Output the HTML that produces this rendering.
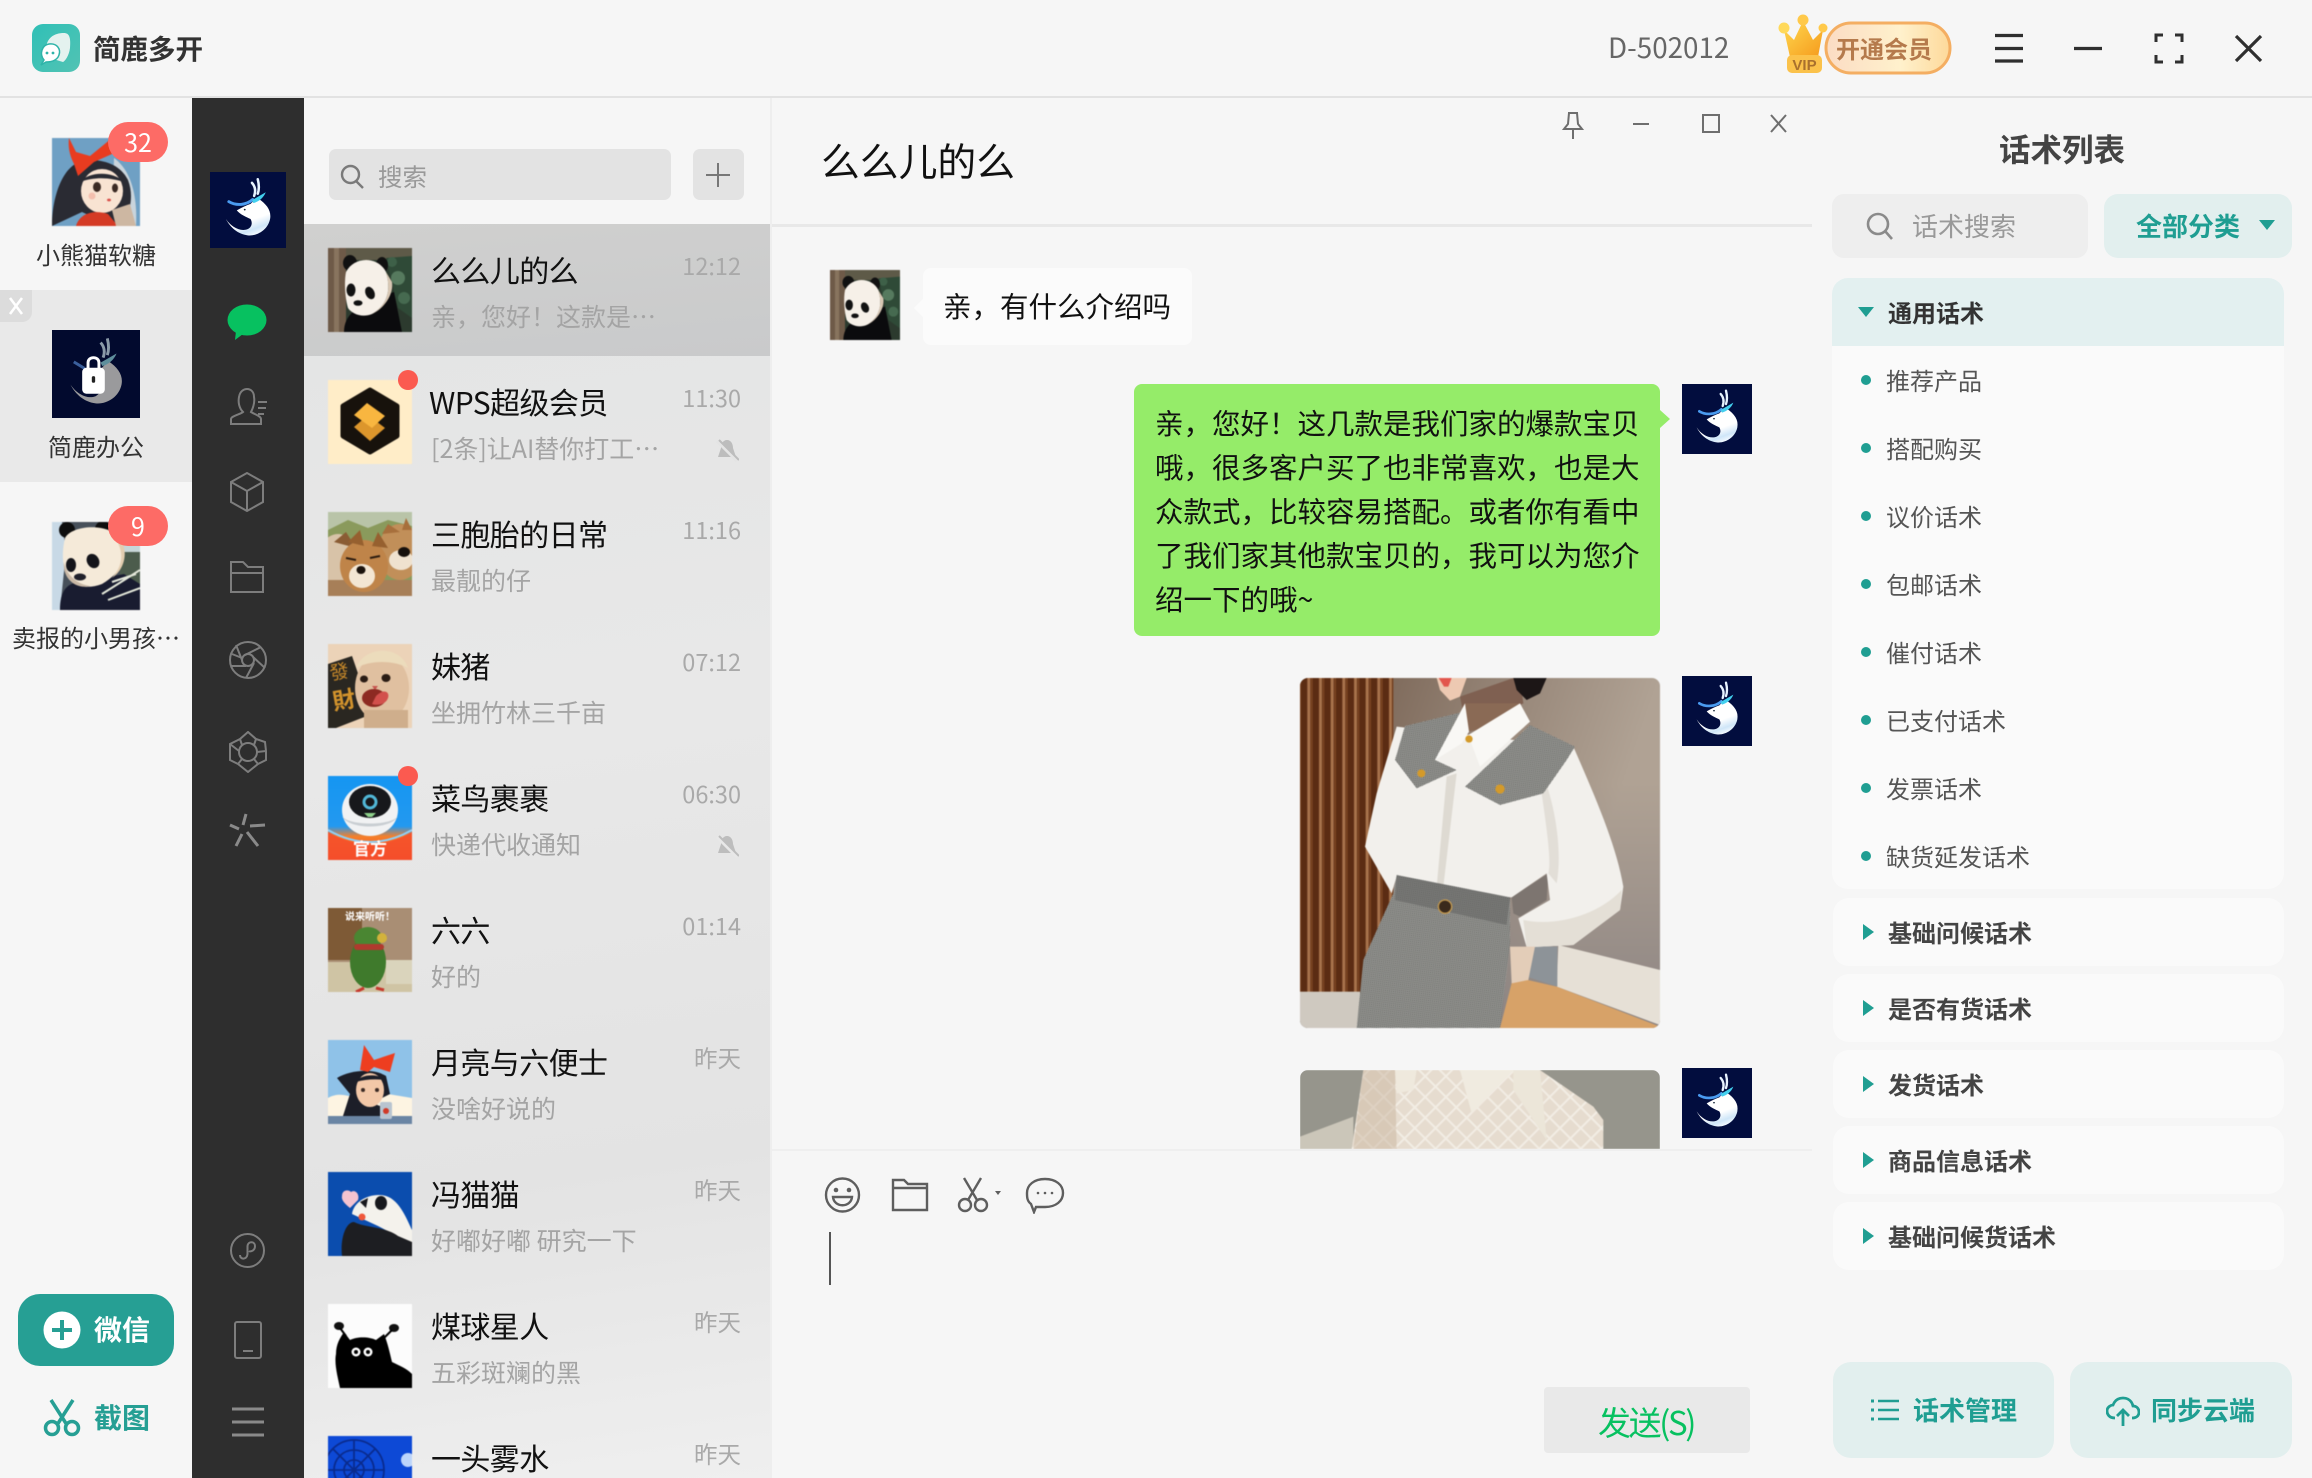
<!DOCTYPE html>
<html lang="zh-CN">
<head>
<meta charset="utf-8">
<title>简鹿多开</title>
<style>
html,body{margin:0;padding:0;width:2312px;height:1478px;overflow:hidden;background:#f6f6f6}
body{position:relative;font-family:"Noto Sans CJK SC","Liberation Sans",sans-serif;color:#222}
.a,.t,svg.a{position:absolute}
.t{white-space:nowrap}
.it{position:absolute;left:304px;width:466px;height:132px}
.it svg{position:absolute;left:24px;top:24px;width:84px;height:84px;filter:blur(.4px)}
.it .n{position:absolute;left:127px;top:20.500px;line-height:48px;font-size:30px;letter-spacing:-.6px;color:#111;white-space:nowrap}
.it .s{position:absolute;left:127px;top:72px;line-height:40px;font-size:25px;color:#a4a4a4;white-space:nowrap}
.it .m{position:absolute;right:29px;top:22px;line-height:38px;font-size:23.5px;color:#a9a9a9;white-space:nowrap}
.it .d{position:absolute;left:94px;top:14px;width:20px;height:20px;border-radius:50%;background:#fb5a50}
.it .b{position:absolute;left:411px;top:83px;width:24px;height:23px;filter:none}
.lb{position:absolute;left:0;width:192px;text-align:center;font-size:24px;line-height:34px;color:#333;white-space:nowrap}
.bg{position:absolute;background:#fd6b66;color:#fff;border-radius:20px;height:40px;line-height:40px;text-align:center;font-size:25px;width:60px}
.ic{position:absolute;fill:none;stroke:#7d7d7d;stroke-width:2}
.hi{position:absolute;left:1886px;font-size:24px;line-height:34px;color:#555;white-space:nowrap}
.bu{position:absolute;left:1861px;width:10px;height:10px;border-radius:50%;background:#1f9e92}
.cd{position:absolute;left:1833px;width:451px;height:68px;background:#fafafa;border-radius:16px}
.cd span{position:absolute;left:55px;top:17px;font-size:24px;line-height:34px;font-weight:700;color:#444;white-space:nowrap}
.cd i{position:absolute;left:30px;top:26px;width:0;height:0;border-left:11px solid #1f9e92;border-top:8px solid transparent;border-bottom:8px solid transparent}
</style>
</head>
<body>
<svg width="0" height="0" style="position:absolute">
<defs>
<linearGradient id="dg" x1="0.2" y1="0.1" x2="0.6" y2="1"><stop offset="0.6" stop-color="#fff"/><stop offset="0.85" stop-color="#cfe6f8"/><stop offset="1" stop-color="#f2f9ff"/></linearGradient>
<symbol id="deer" viewBox="0 0 210 210">
<rect width="210" height="210" fill="#020d3e"/>
<path d="M74 106C88 98 100 92 112 88C120 80 126 76 134 74C158 90 170 108 166 130C160 160 130 178 104 175C78 172 56 154 44 130C58 152 84 166 104 158C116 152 118 140 112 130C100 124 84 118 74 106Z" fill="url(#dg)"/>
<path d="M122 66C127 52 125 40 116 30M132 60C137 46 135 32 132 20" fill="none" stroke="#e8f4ff" stroke-width="7" stroke-linecap="round"/>
<path d="M52 82C72 94 100 92 118 76" fill="none" stroke="#4a9bf0" stroke-width="8" stroke-linecap="round"/>
<path d="M116 78L154 56C148 72 134 82 120 86Z" fill="#43cfee"/>
<circle cx="96" cy="104" r="2.500" fill="#123"/>
</symbol>
<pattern id="chk" width="6" height="6" patternUnits="userSpaceOnUse" patternTransform="rotate(8)"><rect width="6" height="6" fill="#b8b8b4"/><rect width="3" height="3" fill="#3e3f3c"/><rect x="3" y="3" width="3" height="3" fill="#70716e"/></pattern>
<pattern id="stp" width="35" height="20" patternUnits="userSpaceOnUse"><rect width="35" height="20" fill="#5b2c13"/><rect x="12" width="9" height="20" fill="#a8734c"/><rect x="23" width="5" height="20" fill="#7b4522"/></pattern>
<pattern id="dia" width="44" height="44" patternUnits="userSpaceOnUse" patternTransform="rotate(45)"><rect width="44" height="44" fill="#e6dccf"/><rect width="44" height="6" fill="#f2ede4"/><rect width="6" height="44" fill="#f2ede4"/></pattern>
<linearGradient id="wall" x1="0" y1="0" x2="0.9" y2="0.3"><stop offset="0" stop-color="#6f5848"/><stop offset="0.55" stop-color="#948375"/><stop offset="1" stop-color="#b0a294"/></linearGradient>
<linearGradient id="wl2" x1="0" y1="0" x2="0" y2="1"><stop offset="0.3" stop-color="#8d8583" stop-opacity="0"/><stop offset="1" stop-color="#8d8583"/></linearGradient>
<linearGradient id="vip" x1="0" y1="0" x2="1" y2="0"><stop offset="0" stop-color="#fbdcc4"/><stop offset="0.6" stop-color="#fff1cc"/><stop offset="1" stop-color="#fdd99a"/></linearGradient>
<linearGradient id="gld" x1="0" y1="0" x2="1" y2="1"><stop offset="0" stop-color="#ffd84f"/><stop offset="1" stop-color="#f59a1c"/></linearGradient>
<linearGradient id="lg" x1="0" y1="0" x2="1" y2="1"><stop offset="0" stop-color="#30c0b6"/><stop offset="1" stop-color="#52c3b4"/></linearGradient>
<linearGradient id="cai" x1="0" y1="0" x2="0" y2="1"><stop offset="0" stop-color="#1596f2"/><stop offset="0.6" stop-color="#2399f0"/><stop offset="0.72" stop-color="#f6802a"/><stop offset="1" stop-color="#ee3b2e"/></linearGradient>
<symbol id="panda" viewBox="0 0 84 84">
<rect width="84" height="84" fill="#2c3a2e"/><rect x="18" width="66" height="12" fill="#5e5a48"/><path d="M58 10L84 8V70L70 60Z" fill="#2f4a37"/><circle cx="70" cy="30" r="7" fill="#567a5e"/><circle cx="76" cy="50" r="6" fill="#466a50"/><circle cx="64" cy="14" r="5" fill="#3e6048"/>
<rect width="18" height="84" fill="#6e5a48"/><rect x="6" width="5" height="84" fill="#88745e"/>
<path d="M16 84C16 66 30 56 66 44L74 84Z" fill="#0b0b0d"/>
<ellipse cx="22" cy="15" rx="7" ry="8" fill="#111"/><ellipse cx="54" cy="17" rx="6" ry="8" fill="#111"/>
<path d="M18 24C26 8 50 8 58 24C64 44 58 58 44 66C34 70 24 66 20 60C17 50 16 34 18 24Z" fill="#f6f0e8"/><path d="M58 24C64 44 58 58 44 66C54 62 66 48 64 34Z" fill="#d9c8b4"/>
<ellipse cx="23" cy="42" rx="4.500" ry="6.500" fill="#121212"/><ellipse cx="42" cy="45" rx="4.500" ry="6.500" fill="#121212" transform="rotate(-25 42 45)"/>
<ellipse cx="30" cy="55" rx="4.500" ry="2.800" fill="#111"/>
</symbol>
</defs>
</svg>

<!-- title bar -->
<div class="a" style="left:0;top:96px;width:2312px;height:2px;background:#e2e2e2"></div>
<svg class="a" style="left:32px;top:24px" width="48" height="48" viewBox="0 0 48 48"><rect width="48" height="48" rx="11" fill="url(#lg)"/><path d="M14 26C14 14 22 9 32 9C37 9 39 13 38 24C37 32 33 37 31 38C22 35 14 34 14 26Z" fill="#e4f2ef"/><path d="M12 36C7 30 10 21 17 20C25 19 29 25 27 31C25 37 18 38 14 38L9 41Z" fill="#fff" stroke="#2fb4a9" stroke-width="1.500"/><circle cx="15" cy="29" r="1.400" fill="#2fb4a9"/><circle cx="21" cy="29" r="1.400" fill="#2fb4a9"/></svg>
<div class="t" style="left:93px;top:25px;line-height:44px;font-size:27.500px;font-weight:700;color:#333">简鹿多开</div>
<div class="t" style="left:1608px;top:25px;line-height:44px;font-size:27.800px;color:#666">D-502012</div>

<svg class="a" style="left:1776px;top:12px" width="180" height="66" viewBox="0 0 180 66">
<rect x="50" y="11" width="124" height="50" rx="25" fill="url(#vip)" stroke="#f4ae62" stroke-width="3"/>
<path d="M8 18L18 28L27 9L37 28L47 18L42 45H14Z" fill="url(#gld)"/><circle cx="8" cy="16" r="5.500" fill="#ffd95a"/><circle cx="27" cy="8" r="5.500" fill="#ffc94a"/><circle cx="47" cy="16" r="4.500" fill="#ffc94a"/>
<rect x="11" y="43" width="35" height="18" rx="5" fill="#fbc24b"/>
<text x="28.500" y="58" font-size="15" font-weight="700" text-anchor="middle" fill="#a9702d" font-family="Liberation Sans,sans-serif">VIP</text>
</svg>
<div class="t" style="left:1836px;top:30px;line-height:36px;font-size:24px;font-weight:700;color:#b57a4c">开通会员</div>

<svg class="a" style="left:1990px;top:28px" width="290" height="40" viewBox="0 0 290 40" fill="none" stroke="#2f2f2f" stroke-width="3.200">
<path d="M5 7.500H33M5 20.500H33M5 33H33"/>
<path d="M84 20.500H112"/>
<path d="M166 14V7H173M185 7H192V14M166 27V34H173M185 34H192V27" stroke-width="3"/>
<path d="M246 8L271 33M271 8L246 33"/>
</svg>

<!-- accounts -->
<svg class="a" style="left:52px;top:138px;filter:blur(.4px)" width="88" height="88" viewBox="0 0 88 88">
<rect width="88" height="88" fill="#6fa0c4"/><path d="M62 20C76 30 86 52 84 88H60Z" fill="#c9d4dc"/>
<path d="M0 88C0 60 10 28 30 23C50 20 68 26 76 42C82 58 78 72 72 88H60L30 74Z" fill="#2a2b33"/>
<ellipse cx="50" cy="53" rx="21" ry="22" fill="#f8e3d2"/><path d="M28 44C36 34 60 32 72 44C60 40 44 38 28 44Z" fill="#2a2b33"/>
<ellipse cx="45" cy="49" rx="4" ry="5" fill="#3b2a24"/><ellipse cx="63" cy="50" rx="3" ry="4.500" fill="#3b2a24"/><ellipse cx="57" cy="62" rx="2" ry="1.400" fill="#d9504a"/><circle cx="40" cy="58" r="3.500" fill="#f3bfae"/>
<path d="M17 0L24 14L38 18L60 0V16L42 24L26 38L22 26C17 16 16 8 17 0Z" fill="#e83c20"/>
<path d="M24 88C28 74 44 72 56 76L66 88Z" fill="#d43a25"/><path d="M60 72L78 66L84 88H64Z" fill="#cdb7a2"/>
</svg>
<div class="bg" style="left:108px;top:122px">32</div>
<div class="lb" style="top:237px">小熊猫软糖</div>

<div class="a" style="left:0;top:290px;width:192px;height:192px;background:#e9e9e9"></div>
<div class="a" style="left:0;top:290px;width:32px;height:32px;background:#dcdcdc;border-radius:0 0 10px 0"></div>
<svg class="a" style="left:8px;top:297px" width="16" height="18" viewBox="0 0 16 18"><path d="M2 1L14 17M14 1L2 17" stroke="#fff" stroke-width="2.600"/></svg>
<svg class="a" style="left:52px;top:330px" width="88" height="88" viewBox="0 0 210 210">
<rect width="210" height="210" fill="#020a2e"/>
<path d="M100 106C120 90 134 76 134 74C158 90 170 108 166 130C160 160 130 178 104 175C78 172 56 154 44 130C58 152 84 166 104 158C116 152 118 140 112 130Z" fill="#9a9a9c"/>
<path d="M122 66C127 52 125 40 116 30M132 60C137 46 135 32 132 20" stroke="#8a9aa8" stroke-width="7" fill="none"/><path d="M116 78L154 56C148 72 134 82 120 86Z" fill="#5f8f9c"/><path d="M52 76L78 92" stroke="#3a5f9c" stroke-width="7"/>
<path d="M86 92V78C86 62 112 62 112 78V92" fill="none" stroke="#fff" stroke-width="7"/><rect x="72" y="90" width="54" height="62" rx="10" fill="#fff"/><rect x="95" y="110" width="8" height="16" rx="4" fill="#222"/>
</svg>
<div class="lb" style="top:429px">简鹿办公</div>

<svg class="a" style="left:52px;top:522px;filter:blur(.4px)" width="88" height="88" viewBox="0 0 88 88">
<rect width="88" height="88" fill="#47505a"/><path d="M0 0H10L14 30L8 88H0Z" fill="#c8d9e6"/><rect x="60" width="28" height="30" fill="#c7d6d8"/><rect x="68" y="30" width="20" height="40" fill="#4c5c4c"/>
<path d="M8 88C8 70 14 60 30 60L72 52L88 62V88Z" fill="#191c30"/>
<circle cx="15" cy="8" r="8" fill="#0e0e0e"/><circle cx="51" cy="7" r="8" fill="#0e0e0e"/>
<path d="M13 16C20 2 62 0 70 20C76 36 70 50 50 62C34 68 20 64 14 52C10 42 10 28 13 16Z" fill="#f5ead9"/><path d="M62 14C70 26 74 40 60 56C72 48 76 32 70 20Z" fill="#e3cdb0"/><path d="M12 40C14 52 24 62 38 64C24 68 10 56 12 40Z" fill="#c9b8a6"/>
<ellipse cx="19" cy="43" rx="5" ry="7" fill="#14141a"/><ellipse cx="41" cy="39" rx="6" ry="7.500" fill="#14141a" transform="rotate(-30 41 39)"/>
<ellipse cx="28" cy="55" rx="6" ry="3.500" fill="#20202a"/>
<path d="M50 72L88 48M56 78L88 66M60 60L84 52" stroke="#e4e8da" stroke-width="2" fill="none"/>
</svg>
<div class="bg" style="left:108px;top:506px">9</div>
<div class="lb" style="top:620px">卖报的小男孩…</div>

<div class="a" style="left:18px;top:1294px;width:156px;height:72px;border-radius:22px;background:#269f94"></div>
<svg class="a" style="left:43px;top:1311px" width="38" height="38" viewBox="0 0 38 38"><circle cx="19" cy="19" r="18.500" fill="#fff"/><path d="M19 9V29M9 19H29" stroke="#269f94" stroke-width="4"/></svg>
<div class="t" style="left:94px;top:1310px;line-height:38px;font-size:28px;font-weight:700;color:#fff">微信</div>
<svg class="a" style="left:43px;top:1399px" width="38" height="38" viewBox="0 0 38 38" fill="none" stroke="#269f94" stroke-width="3.500"><path d="M8 1L24 26M30 1L14 26"/><circle cx="9" cy="29" r="6.500"/><circle cx="29" cy="29" r="6.500"/></svg>
<div class="t" style="left:94px;top:1398px;line-height:38px;font-size:28px;font-weight:700;color:#269f94">截图</div>

<!-- dark nav -->
<div class="a" style="left:192px;top:98px;width:112px;height:1380px;background:#2e2e2e"></div>
<svg class="a" style="left:210px;top:172px" width="76" height="76"><use href="#deer"/></svg>
<svg class="a" style="left:227px;top:304px" width="40" height="36" viewBox="0 0 40 36"><ellipse cx="20" cy="16" rx="19.500" ry="15.500" fill="#07c160"/><path d="M9 27L8 36L16 30Z" fill="#07c160"/></svg>
<svg class="ic" style="left:228px;top:388px" width="40" height="38" viewBox="0 0 40 38"><path d="M3 36V31C3 28 13 26 15 24C11 20 10 14 11 9C12 3 16 1 19 1C23 1 26 4 26 9C27 14 25 20 23 24C26 26 33 28 33 31V36Z"/><path d="M30 14H39M30 20H38M30 26H36"/></svg>
<svg class="ic" style="left:229px;top:472px" width="36" height="40" viewBox="0 0 36 40"><path d="M18 1L34 10V30L18 39L2 30V10ZM2 10L18 19L34 10M18 19V39"/></svg>
<svg class="ic" style="left:229px;top:560px" width="36" height="34" viewBox="0 0 36 34"><path d="M2 2H14L19 7H34V32H2ZM2 13H34"/></svg>
<svg class="ic" style="left:228px;top:640px" width="40" height="40" viewBox="0 0 40 40"><circle cx="20" cy="20" r="18"/><circle cx="20" cy="20" r="6"/><path d="M14 20L8 5M17 15L33 7M25 17L37 28M26 23L18 38M18 26L3 26M14 18L4 14"/></svg>
<svg class="ic" style="left:228px;top:731px" width="40" height="42" viewBox="0 0 40 42"><path d="M20 1L28 8L37 11L38 20L38 29L30 33L20 41L10 33L2 29L2 13L12 8Z"/><circle cx="20" cy="21" r="9"/><path d="M12 8L14 14M28 8L26 14M2 13L11 20M38 20L29 21M10 33L14 28M30 33L26 28"/></svg>
<svg class="a" style="left:229px;top:812px" width="38" height="38" viewBox="0 0 38 38" fill="none" stroke="#8a8a8a" stroke-width="3"><path d="M1 13L10 17M17 2L14 13M21 14L36 13M13 22L7 34M18 20L29 34"/></svg>
<svg class="ic" style="left:230px;top:1232px" width="35" height="37" viewBox="0 0 35 37"><circle cx="17.500" cy="18.500" r="16.500"/><path d="M10 23C10 28 17 28 17.500 22V14C18 9 25 9 25 14C25 19 20 20 19 19"/></svg>
<svg class="ic" style="left:233px;top:1320px" width="30" height="40" viewBox="0 0 30 40"><rect x="2" y="2" width="26" height="36" rx="2"/><path d="M10 31H20"/></svg>
<svg class="a" style="left:232px;top:1407px" width="32" height="30" viewBox="0 0 32 30" fill="none" stroke="#8a8a8a" stroke-width="3"><path d="M0 2H32M0 15H32M0 28H32"/></svg>

<!-- list -->
<div class="a" style="left:304px;top:98px;width:466px;height:126px;background:#f6f6f6"></div>
<div class="a" style="left:304px;top:224px;width:466px;height:1254px;background:linear-gradient(172deg,#e3e4e4 0%,#e8e8e8 40%,#e3e3e3 75%,#efefef 100%)"></div>
<div class="a" style="left:770px;top:98px;width:2px;height:1380px;background:#eeeeee"></div>
<div class="a" style="left:329px;top:149px;width:342px;height:51px;border-radius:7px;background:#e3e3e3"></div>
<svg class="a" style="left:340px;top:164px" width="25" height="26" viewBox="0 0 25 26" fill="none" stroke="#7a7a7a" stroke-width="2.400"><circle cx="10.500" cy="10.500" r="8.500"/><path d="M16 17L23 24"/></svg>
<div class="t" style="left:378px;top:159px;line-height:36px;font-size:24.500px;color:#999">搜索</div>
<div class="a" style="left:693px;top:149px;width:51px;height:51px;border-radius:7px;background:#e3e3e3"></div>
<svg class="a" style="left:706px;top:163px" width="24" height="24" viewBox="0 0 24 24"><path d="M12 0V24M0 12H24" stroke="#777" stroke-width="2"/></svg>

<!-- item 1 -->
<div class="it" style="top:224px;background:linear-gradient(175deg,#d0d0cf,#c9cacb)">
<svg viewBox="0 0 84 84"><use href="#panda"/></svg>
<div class="n">么么儿的么</div><div class="s">亲，您好！这款是…</div><div class="m">12:12</div></div>
<!-- item 2 -->
<div class="it" style="top:356px">
<svg viewBox="0 0 84 84"><rect width="84" height="84" fill="#ffedc8"/><path d="M42 10L69 26V56L42 72L15 56V26Z" fill="#17120c" stroke="#17120c" stroke-width="5" stroke-linejoin="round"/><path d="M26 47L40 35L57 48L42 61Z" fill="#dc962c"/><path d="M39 23L57 36L44 48L26 35Z" fill="#f8b640"/></svg>
<div class="d"></div><div class="n" style="left:125px">WPS超级会员</div><div class="s">[2条]让AI替你打工…</div><div class="m">11:30</div>
<svg class="b" viewBox="0 0 24 23"><path d="M12 1C16 1 18 5 18 9L21 18H3L6 9C6 5 8 1 12 1Z" fill="#bdbdbd"/><path d="M2 2L22 22" stroke="#e4e4e4" stroke-width="3"/><path d="M4 1L24 21" stroke="#bdbdbd" stroke-width="2"/></svg></div>
<!-- item 3 -->
<div class="it" style="top:488px">
<svg viewBox="0 0 84 84"><rect width="84" height="84" fill="#8a9a5c"/><path d="M0 0H84V14L60 8L40 16L20 8L0 18Z" fill="#b9c4a8"/><ellipse cx="10" cy="54" rx="22" ry="32" fill="#d8c3a8"/><path d="M6 30L18 20L28 36Z" fill="#8a5c34"/><ellipse cx="72" cy="40" rx="22" ry="28" fill="#c18f59"/><path d="M54 22L60 12L72 20ZM78 6L84 18L74 18Z" fill="#a76f3c"/><ellipse cx="73" cy="48" rx="12" ry="10" fill="#efe2cf"/><ellipse cx="76" cy="40" rx="6" ry="5" fill="#16100c"/><rect y="68" width="84" height="16" fill="#a77f58"/><ellipse cx="36" cy="54" rx="24" ry="26" fill="#bf8449"/><path d="M20 30L32 18L36 34ZM44 34L50 20L60 36Z" fill="#96602f"/><ellipse cx="34" cy="64" rx="13" ry="12" fill="#f3e6d3"/><ellipse cx="33" cy="58" rx="4.500" ry="4" fill="#1a120c"/><path d="M18 46L28 48M42 46L52 44" stroke="#2c1c10" stroke-width="2"/></svg>
<div class="n">三胞胎的日常</div><div class="s">最靓的仔</div><div class="m">11:16</div></div>
<!-- item 4 -->
<div class="it" style="top:620px">
<svg viewBox="0 0 84 84"><rect width="84" height="84" fill="#ecd3b8"/><path d="M24 12L44 70L8 84H0V20Z" fill="#2a2721"/><text x="3" y="36" font-size="19" fill="#c98a2a" font-family="Noto Sans CJK SC,sans-serif" transform="rotate(-10 3 36)">發</text><text x="6" y="66" font-size="23" fill="#d2932c" font-family="Noto Sans CJK SC,sans-serif" font-weight="700" transform="rotate(-10 6 66)">財</text><ellipse cx="54" cy="44" rx="27" ry="34" fill="#e0c0a0"/><path d="M28 24C36 2 72 0 80 24C66 16 42 16 28 24Z" fill="#ecdcbc"/><ellipse cx="36" cy="35" rx="4" ry="3.500" fill="#2a1c14"/><ellipse cx="58" cy="34" rx="4.500" ry="4" fill="#2a1c14"/><path d="M44 42H50L47 46Z" fill="#c7544e"/><ellipse cx="46" cy="54" rx="12" ry="9" fill="#8d2a22"/><path d="M48 52C56 44 62 48 60 54C58 60 50 62 44 60Z" fill="#d2504c"/><rect x="36" y="66" width="44" height="18" fill="#cfae8c"/></svg>
<div class="n">妹猪</div><div class="s">坐拥竹林三千亩</div><div class="m">07:12</div></div>
<!-- item 5 -->
<div class="it" style="top:752px">
<svg viewBox="0 0 84 84"><rect width="84" height="84" fill="url(#cai)"/><path d="M0 56C28 72 56 72 84 56V84H0Z" fill="#f5502a" opacity=".9"/><path d="M0 54C28 70 56 70 84 54" fill="none" stroke="#8fd0f7" stroke-width="2"/><ellipse cx="42" cy="34" rx="28" ry="26" fill="#f1f2f3"/><path d="M14 40C20 54 64 54 70 40C64 50 20 50 14 40Z" fill="#c9ced2"/><ellipse cx="42" cy="26" rx="21" ry="16" fill="#17181b"/><circle cx="42" cy="26" r="6" fill="none" stroke="#51b7d6" stroke-width="3"/><path d="M36 37H48L44 41H40Z" fill="#8ed08a"/><text x="42" y="79" font-size="17" font-weight="700" text-anchor="middle" fill="#fff" font-family="Noto Sans CJK SC,sans-serif">官方</text></svg>
<div class="d"></div><div class="n">菜鸟裹裹</div><div class="s">快递代收通知</div><div class="m">06:30</div>
<svg class="b" viewBox="0 0 24 23"><path d="M12 1C16 1 18 5 18 9L21 18H3L6 9C6 5 8 1 12 1Z" fill="#bdbdbd"/><path d="M2 2L22 22" stroke="#e8e8e8" stroke-width="3"/><path d="M4 1L24 21" stroke="#bdbdbd" stroke-width="2"/></svg></div>
<!-- item 6 -->
<div class="it" style="top:884px">
<svg viewBox="0 0 84 84"><rect width="84" height="84" fill="#a98e74"/><rect width="34" height="52" fill="#7e5a36"/><rect y="54" width="84" height="30" fill="#cfc4a4"/><rect x="58" y="52" width="26" height="24" fill="#dad4bc"/><ellipse cx="40" cy="54" rx="18" ry="26" fill="#3f7a2c"/><ellipse cx="40" cy="30" rx="14" ry="11" fill="#4a8632"/><rect x="26" y="36" width="30" height="6" rx="3" fill="#b03a2e"/><circle cx="54" cy="30" r="5" fill="#d2b23c"/><path d="M36 80L28 84M48 80L56 82" stroke="#c63a2e" stroke-width="3"/><text x="42" y="12" font-size="10" font-weight="700" text-anchor="middle" fill="#fff" font-family="Noto Sans CJK SC,sans-serif">说来听听！</text></svg>
<div class="n">六六</div><div class="s">好的</div><div class="m">01:14</div></div>
<!-- item 7 -->
<div class="it" style="top:1016px">
<svg viewBox="0 0 84 84"><rect width="84" height="84" fill="#8fc2e8"/><path d="M0 58C14 50 24 60 34 56L60 54L84 58V78H0Z" fill="#fdf4e2"/><rect y="76" width="84" height="8" fill="#6a85a4"/><path d="M9 38C22 30 46 28 58 36L62 54L50 60L30 76H15L22 54Z" fill="#1c1e28"/><path d="M15 76C20 64 38 60 52 66L58 76Z" fill="#1c1e28"/><ellipse cx="42" cy="50" rx="14" ry="17" fill="#f3c8a8"/><path d="M28 42C32 34 50 33 58 40C48 39 38 39 28 42Z" fill="#1c1e28"/><path d="M32 30L36 5L46 20L67 13L62 32L46 27L40 32Z" fill="#ee3e20"/><circle cx="35" cy="50" r="2" fill="#3b2a24"/><circle cx="49" cy="50" r="2" fill="#3b2a24"/><rect x="52" y="62" width="12" height="17" rx="2" fill="#b8c4d0"/><circle cx="58" cy="71" r="3" fill="#d03a28"/></svg>
<div class="n">月亮与六便士</div><div class="s">没啥好说的</div><div class="m">昨天</div></div>
<!-- item 8 -->
<div class="it" style="top:1148px">
<svg viewBox="0 0 84 84"><rect width="84" height="84" fill="#0b4dae"/><path d="M24 42C26 28 44 20 58 24C72 28 80 50 84 58V72L50 54Z" fill="#f4f2ec"/><ellipse cx="53" cy="31" rx="6" ry="7" fill="#17181c"/><path d="M32 30L40 26L38 36Z" fill="#17181c"/><circle cx="34" cy="45" r="3.500" fill="#f0573a"/><path d="M14 24C14 18 20 17 23 20C27 17 32 22 30 28L22 36C17 32 13 28 14 24Z" fill="#f4c3d0"/><path d="M14 84C12 66 18 50 26 50C38 56 56 54 70 64L84 70V84Z" fill="#1d1e22"/></svg>
<div class="n">冯猫猫</div><div class="s">好嘟好嘟 研究一下</div><div class="m">昨天</div></div>
<!-- item 9 -->
<div class="it" style="top:1280px">
<svg viewBox="0 0 84 84"><rect width="84" height="84" fill="#fcfcfc"/><path d="M8 50C8 40 12 34 16 28L22 36C30 32 42 33 48 36L56 30C60 40 62 50 64 58C72 62 78 64 84 70V84H12C10 74 6 60 8 50Z" fill="#000"/><ellipse cx="11" cy="22" rx="5" ry="4" fill="#111"/><ellipse cx="66" cy="24" rx="5" ry="4" fill="#111"/><path d="M12 24L18 32M64 26L56 34" stroke="#000" stroke-width="2"/><circle cx="28" cy="48" r="4.500" fill="#fff"/><circle cx="40" cy="48" r="4.500" fill="#fff"/><circle cx="28" cy="48" r="2" fill="#000"/><circle cx="40" cy="48" r="2" fill="#000"/></svg>
<div class="n">煤球星人</div><div class="s">五彩斑斓的黑</div><div class="m">昨天</div></div>
<!-- item 10 -->
<div class="it" style="top:1412px">
<svg viewBox="0 0 84 84"><rect width="84" height="84" fill="#0d49d6"/><g fill="none" stroke="#0a2b8e" stroke-width="1.800"><circle cx="26" cy="34" r="30"/><circle cx="26" cy="34" r="20"/><circle cx="26" cy="34" r="10"/><path d="M26 4V64M-4 34H56M5 13L47 55M47 13L5 55"/></g><circle cx="80" cy="24" r="7" fill="#cfe4ff" opacity=".9"/></svg>
<div class="n">一头雾水</div><div class="m">昨天</div></div>

<!-- chat -->
<div class="t" style="left:821px;top:131.500px;line-height:56px;font-size:38.800px;color:#111">么么儿的么</div>
<div class="a" style="left:772px;top:224px;width:1040px;height:3px;background:#e8e8e8"></div>
<svg class="a" style="left:1560px;top:110px" width="230" height="30" viewBox="0 0 230 30" fill="none" stroke="#6e6e6e" stroke-width="2"><path d="M8 3H18M9 3L8 14L4 19H22L18 14L17 3M13 19V29"/><path d="M73 14H89" /><rect x="143" y="5" width="16" height="17"/><path d="M211 5L226 22M226 5L211 22"/></svg>

<svg class="a" style="left:830px;top:270px;filter:blur(.4px)" width="70" height="70"><use href="#panda"/></svg>
<div class="a" style="left:923px;top:268px;width:269px;height:77px;border-radius:8px;background:#fbfbfb"></div>
<div class="a" style="left:914px;top:299px;width:0;height:0;border-right:9px solid #fbfbfb;border-top:9px solid transparent;border-bottom:9px solid transparent"></div>
<div class="t" style="left:943px;top:284px;line-height:44px;font-size:28.500px;color:#111">亲，有什么介绍吗</div>

<div class="a" style="left:1134px;top:384px;width:526px;height:252px;border-radius:8px;background:#95ec69"></div>
<div class="a" style="left:1660px;top:410px;width:0;height:0;border-left:10px solid #95ec69;border-top:9px solid transparent;border-bottom:9px solid transparent"></div>
<div class="t" style="left:1155px;top:401px;line-height:44px;font-size:28.500px;color:#111">亲，您好！这几款是我们家的爆款宝贝<br>哦，很多客户买了也非常喜欢，也是大<br>众款式，比较容易搭配。或者你有看中<br>了我们家其他款宝贝的，我可以为您介<br>绍一下的哦~</div>
<svg class="a" style="left:1682px;top:384px" width="70" height="70"><use href="#deer"/></svg>

<svg class="a" style="left:1300px;top:678px;border-radius:8px;filter:blur(.5px)" width="360" height="350" viewBox="60 54 1080 1050">
<rect x="60" y="54" width="1080" height="1050" fill="url(#wall)"/>
<rect x="60" y="54" width="1080" height="1050" fill="url(#wl2)"/>
<rect x="60" y="54" width="280" height="950" fill="url(#stp)"/>
<rect x="60" y="995" width="180" height="109" fill="#cfc9c0"/>
<path d="M835 855L1140 930V1095L830 980Z" fill="#e6e0d6"/>
<path d="M660 1104L700 950L830 980L1140 1100V1104Z" fill="#d7a268"/>
<path d="M740 860H832V980L740 950Z" fill="#8d9398"/>
<path d="M470 54H560L540 110L510 122L480 90Z" fill="#edc9b2"/><path d="M476 54H515L505 80L492 80Z" fill="#e2564d"/>
<path d="M540 110L700 54H720L730 130L560 210Z" fill="#7f6051"/>
<path d="M700 54H800L780 100L740 120L710 90Z" fill="#1c1616"/>
<path d="M805 640L695 712L700 760L720 770L800 720Z" fill="#7d7570"/>
<path d="M350 200L880 260C950 420 1010 560 1030 680L1020 750L880 855L740 862L715 775L810 720L800 640L695 712L470 690L350 650L335 700L255 560L290 400Z" fill="#f2f0ec"/>
<path d="M500 350L470 680L490 680L530 340Z" fill="#dedad2"/>
<path d="M770 300C800 500 815 600 805 640L830 670C850 560 820 400 770 300Z" fill="#e2ded7"/>
<path d="M730 780C820 800 950 770 1025 690L1020 750L880 855L740 862Z" fill="#e4dfd6"/>
<path d="M345 300L375 198L540 158L465 300L530 330L410 385Z" fill="url(#chk)"/>
<path d="M555 380L640 300L750 195L885 260L860 300L790 400L660 435Z" fill="url(#chk)"/>
<path d="M555 130L720 130L640 200L565 215Z" fill="#8a6a55"/>
<path d="M555 130L567 215L545 250L465 300Z" fill="#f9f8f5"/>
<path d="M720 130L750 185L600 320L565 225Z" fill="#f9f8f5"/>
<circle cx="567" cy="237" r="11" fill="#d49a2a"/><circle cx="424" cy="340" r="12" fill="#d49a2a"/><circle cx="660" cy="387" r="14" fill="#d49a2a"/>
<path d="M350 645L690 712L690 850L660 1104H230L250 900L340 700Z" fill="url(#chk)"/>
<path d="M350 645L690 712L680 795L345 720Z" fill="#4c4d4c" opacity=".35"/>
<circle cx="495" cy="740" r="20" fill="#3a2a1c" stroke="#c49a50" stroke-width="4"/>
<path d="M690 860L765 860L745 960L695 970Z" fill="#e3cdb8"/>
</svg>
<svg class="a" style="left:1682px;top:676px" width="70" height="70"><use href="#deer"/></svg>
<div class="a" style="left:1300px;top:1070px;width:360px;height:79px;overflow:hidden;border-radius:8px 8px 0 0">
<svg width="360" height="79" viewBox="60 1230 1080 237" style="filter:blur(.5px)">
<rect x="60" y="1230" width="1080" height="237" fill="#96958c"/>
<path d="M60 1467V1430L220 1370V1467Z" fill="#cbc6b9"/>
<path d="M250 1230H780L940 1340L970 1380V1467H215Z" fill="url(#dia)"/>
<path d="M345 1230L350 1467H220L250 1230Z" fill="#c9b5a0" opacity=".5"/>
<path d="M540 1230H700L575 1360Z" fill="#f0ebe0"/><path d="M700 1230H780L800 1440L700 1290Z" fill="#ece6d9"/><path d="M345 1230H410L400 1290L350 1300Z" fill="#efe9dd"/>
</svg></div>
<svg class="a" style="left:1682px;top:1068px" width="70" height="70"><use href="#deer"/></svg>
<div class="a" style="left:772px;top:1149px;width:1040px;height:2px;background:#efefef"></div>

<svg class="a" style="left:824px;top:1176px" width="250" height="38" viewBox="0 0 250 38" fill="none" stroke="#5e5e5e" stroke-width="2.400">
<circle cx="18.500" cy="19" r="16.500"/><circle cx="12" cy="14" r="2.300" fill="#5e5e5e" stroke="none"/><circle cx="25" cy="14" r="2.300" fill="#5e5e5e" stroke="none"/><path d="M9 21H28C27 32 10 32 9 21Z"/>
<path d="M69 4H80L84 8H103V34H69ZM69 12H103"/>
<path d="M140 2L153 24M157 2L144 24"/><circle cx="141" cy="29" r="6"/><circle cx="157" cy="29" r="6"/><path d="M171 15H177L174 19Z" fill="#5e5e5e" stroke="none"/>
<path d="M221 3C232 3 239 9 239 17C239 25 232 31 221 31H212L210 36L207 28C203 25 203 21 203 17C203 9 210 3 221 3Z"/><circle cx="214" cy="17" r="1.300" fill="#5e5e5e" stroke="none"/><circle cx="221" cy="17" r="1.300" fill="#5e5e5e" stroke="none"/><circle cx="228" cy="17" r="1.300" fill="#5e5e5e" stroke="none"/>
</svg>
<div class="a" style="left:829px;top:1232px;width:2px;height:53px;background:#555"></div>
<div class="a" style="left:1544px;top:1387px;width:206px;height:66px;border-radius:4px;background:#e9e9e9"></div>
<div class="t" style="left:1598px;top:1397px;line-height:48px;font-size:33px;letter-spacing:-2.400px;color:#07c160">发送(S)</div>

<!-- right panel -->
<div class="a" style="left:1812px;top:98px;width:500px;height:1380px;background:#f6f6f6"></div>
<div class="t" style="left:1999px;top:124px;line-height:48px;font-size:31.500px;font-weight:700;color:#444">话术列表</div>
<div class="a" style="left:1832px;top:194px;width:256px;height:64px;border-radius:12px;background:#eeeeee"></div>
<svg class="a" style="left:1866px;top:212px" width="28" height="28" viewBox="0 0 28 28" fill="none" stroke="#8a8a8a" stroke-width="2.600"><circle cx="12" cy="12" r="10"/><path d="M19 19L26 27"/></svg>
<div class="t" style="left:1912px;top:206px;line-height:40px;font-size:26px;color:#999">话术搜索</div>
<div class="a" style="left:2104px;top:194px;width:188px;height:64px;border-radius:14px;background:#e2efee"></div>
<div class="t" style="left:2136px;top:206px;line-height:40px;font-size:26px;font-weight:700;color:#1f9e92">全部分类</div>
<div class="a" style="left:2259px;top:220px;width:0;height:0;border-top:10px solid #1f9e92;border-left:8px solid transparent;border-right:8px solid transparent"></div>

<div class="a" style="left:1832px;top:278px;width:452px;height:611px;background:#fafafa;border-radius:16px"></div>
<div class="a" style="left:1832px;top:278px;width:452px;height:68px;background:#e3f0f0;border-radius:16px 16px 0 0"></div>
<div class="a" style="left:1858px;top:307px;width:0;height:0;border-top:10px solid #1f9e92;border-left:8px solid transparent;border-right:8px solid transparent"></div>
<div class="t" style="left:1888px;top:295px;line-height:34px;font-size:24px;font-weight:700;color:#333">通用话术</div>
<div class="bu" style="top:375px"></div><div class="hi" style="top:363px">推荐产品</div>
<div class="bu" style="top:443px"></div><div class="hi" style="top:431px">搭配购买</div>
<div class="bu" style="top:511px"></div><div class="hi" style="top:499px">议价话术</div>
<div class="bu" style="top:579px"></div><div class="hi" style="top:567px">包邮话术</div>
<div class="bu" style="top:647px"></div><div class="hi" style="top:635px">催付话术</div>
<div class="bu" style="top:715px"></div><div class="hi" style="top:703px">已支付话术</div>
<div class="bu" style="top:783px"></div><div class="hi" style="top:771px">发票话术</div>
<div class="bu" style="top:851px"></div><div class="hi" style="top:839px">缺货延发话术</div>

<div class="cd" style="top:898px"><i></i><span>基础问候话术</span></div>
<div class="cd" style="top:974px"><i></i><span>是否有货话术</span></div>
<div class="cd" style="top:1050px"><i></i><span>发货话术</span></div>
<div class="cd" style="top:1126px"><i></i><span>商品信息话术</span></div>
<div class="cd" style="top:1202px"><i></i><span>基础问候货话术</span></div>

<div class="a" style="left:1833px;top:1362px;width:221px;height:96px;border-radius:18px;background:#e2efee"></div>
<div class="a" style="left:2070px;top:1362px;width:222px;height:96px;border-radius:18px;background:#e2efee"></div>
<svg class="a" style="left:1870px;top:1398px" width="30" height="24" viewBox="0 0 30 24"><path d="M8 3H29M8 12H29M8 21H29" stroke="#1f9e92" stroke-width="2.600"/><path d="M1 3H4M1 12H4M1 21H4" stroke="#1f9e92" stroke-width="3"/></svg>
<div class="t" style="left:1913px;top:1390px;line-height:40px;font-size:26px;font-weight:700;color:#1f9e92">话术管理</div>
<svg class="a" style="left:2106px;top:1396px" width="34" height="30" viewBox="0 0 34 30" fill="none" stroke="#1f9e92" stroke-width="2.800"><path d="M9 22C3 22 1 18 1 15C1 11 5 9 7 9C9 4 13 2 17 2C23 2 26 6 27 10C31 10 33 13 33 16C33 20 30 22 26 22"/><path d="M17 30V14M11 20L17 14L23 20"/></svg>
<div class="t" style="left:2151px;top:1390px;line-height:40px;font-size:26px;font-weight:700;color:#1f9e92">同步云端</div>
</body>
</html>
